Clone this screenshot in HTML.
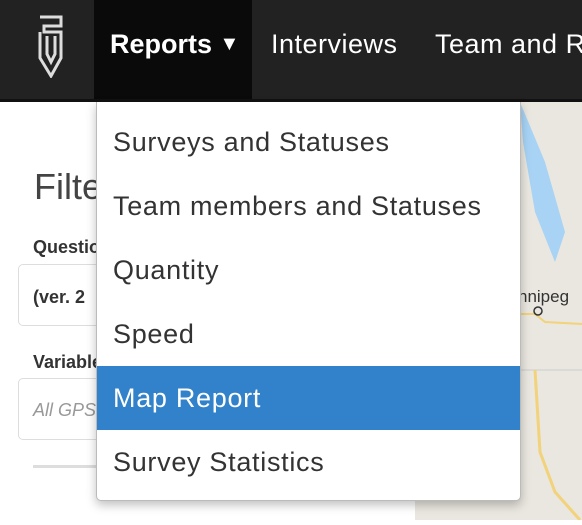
<!DOCTYPE html>
<html><head><style>
body{margin:0;width:582px;height:520px;overflow:hidden;position:relative;font-family:"Liberation Sans",sans-serif;background:#fff}
.nav{position:absolute;left:0;top:0;width:582px;height:99px;background:#222;border-bottom:3px solid #111}
.nav span{position:absolute;top:29px;color:#fff;font-size:27px;letter-spacing:0.5px}
.act{position:absolute;left:94px;top:0;width:158px;height:99px;background:#0a0a0a}
.map{position:absolute;left:415px;top:102px;width:167px;height:418px;background:#e9e7df}
.dd{position:absolute;left:96px;top:102px;width:423px;height:398px;background:#fff;border:1px solid #bbb;border-top:none;border-radius:0 0 5px 5px;box-shadow:0 4px 10px rgba(0,0,0,.25)}
.dd div{height:64px;line-height:64px;padding-left:16px;font-size:27px;color:#333;letter-spacing:0.7px}
.dd .h{background:#3182ca;color:#fff}
.lbl{position:absolute;left:33px;font-weight:bold;font-size:18px;color:#333}
.box{position:absolute;left:18px;width:100px;height:60px;border:1px solid #ddd;border-radius:5px}
</style></head><body>
<div class="nav">
<div class="act"></div>
<svg style="position:absolute;left:36px;top:14px" width="30" height="64" viewBox="0 0 30 64" fill="none" stroke="#ddd" stroke-width="3"><path d="M4 3H25V12H8V18H25V44L15 62L4 44V18"/><path d="M11 22V40L15 48L19 40V22"/></svg>
<span style="left:110px;font-weight:bold;letter-spacing:0">Reports <span style="position:static;font-size:20px;vertical-align:3px">▼</span></span>
<span style="left:271px">Interviews</span>
<span style="left:435px;white-space:nowrap">Team and R</span>
</div>
<div style="position:absolute;left:34px;top:166px;font-size:36px;color:#444">Filters</div>
<div class="lbl" style="top:237px">Questionnaire</div>
<div class="box" style="top:264px"></div>
<div class="lbl" style="top:287px">(ver. 2</div>
<div class="lbl" style="top:352px">Variable</div>
<div class="box" style="top:378px"></div>
<div style="position:absolute;left:33px;top:400px;font-size:18px;color:#999;font-style:italic">All GPS</div>
<div style="position:absolute;left:33px;top:465px;width:90px;height:3px;background:#ddd"></div>
<div class="map">
<svg width="167" height="418"><path d="M105 0 L130 60 L150 130 L140 160 L120 110 L108 40Z" fill="#a8d3f5"/><path d="M0 268 L167 268" stroke="#ccc"/><path d="M90 212 L120 212 L130 220 L167 222" stroke="#f2d27a" stroke-width="2" fill="none"/><path d="M120 268 L125 350 L140 390 L165 418" stroke="#f2d27a" stroke-width="3" fill="none"/><text x="103" y="200" font-size="17" font-family="Liberation Sans" fill="#333">nnipeg</text><circle cx="123" cy="209" r="4" fill="none" stroke="#333" stroke-width="1.5"/></svg>
</div>
<div class="dd">
<div style="margin-top:8px">Surveys and Statuses</div>
<div>Team members and Statuses</div>
<div>Quantity</div>
<div>Speed</div>
<div class="h">Map Report</div>
<div>Survey Statistics</div>
</div>
</body></html>
